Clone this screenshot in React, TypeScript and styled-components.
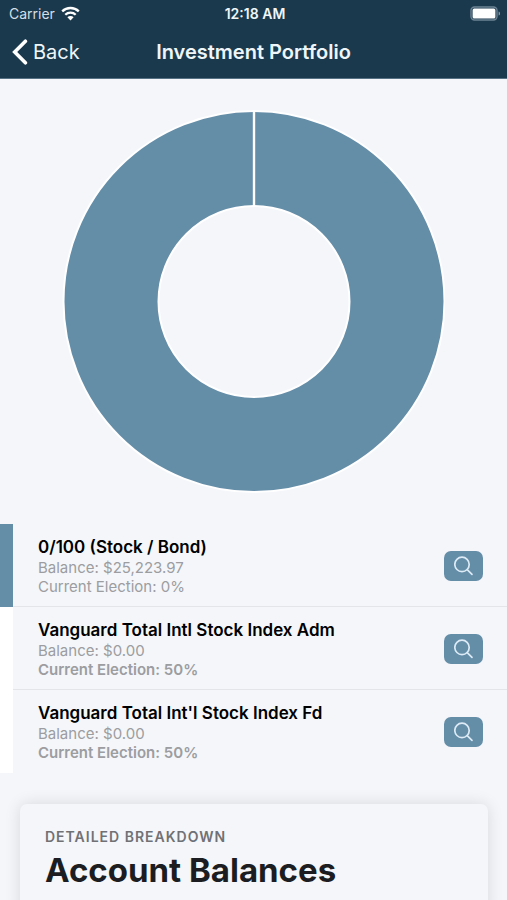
import React from "react";
import styled, { createGlobalStyle } from "styled-components";

const color = {
  navy: "#1b394d",
  steel: "#648da8",
  page: "#f4f6fa",
  line: "#e3e5e9",
  muted: "#9c9da0",
};

const GlobalStyle = createGlobalStyle`
  *, *::before, *::after { box-sizing: border-box; }
  body {
    margin: 0;
    background: ${color.page};
    color: #000;
    font-family: Inter, "Liberation Sans", sans-serif;
  }
  h1, h2, h3, p, ul { margin: 0; padding: 0; }
`;

const Screen = styled.div`
  display: flex;
  flex-direction: column;
  height: 100vh;
`;

const Header = styled.header`
  flex: none;
  background: ${color.navy};
  color: #eef6fa;
  border-bottom: 1px solid #567084;
`;

const StatusBar = styled.div`
  display: grid;
  grid-template-columns: 1fr auto 1fr;
  align-items: center;
  height: 27px;
  padding: 0 6px 0 9px;
  font-size: 14px;
  line-height: 20px;
`;

const Carrier = styled.span`
  display: flex;
  align-items: center;
  gap: 6px;
  color: #d3dfe6;
`;

const Clock = styled.time`
  font-size: 14px;
  font-weight: 600;
`;

const BatterySlot = styled.span`
  display: flex;
  justify-content: flex-end;
`;

const NavBar = styled.nav`
  display: grid;
  grid-template-columns: 1fr auto 1fr;
  align-items: center;
  height: 51px;
  padding: 0 12px 2px;
`;

const BackButton = styled.button`
  display: flex;
  align-items: center;
  justify-self: start;
  gap: 5px;
  padding: 0;
  border: 0;
  background: none;
  color: inherit;
  font: inherit;
  font-size: 20px;
  line-height: 28px;
  cursor: pointer;
`;

const NavTitle = styled.h1`
  font-size: 20px;
  font-weight: 600;
  line-height: 28px;
`;

const Content = styled.main`
  flex: 1;
  min-height: 0;
  overflow-y: auto;
  scrollbar-width: none;
`;

const ChartArea = styled.section`
  padding: 31px 62px;
`;

const Chart = styled.svg`
  display: block;
  width: 100%;
`;

const FundList = styled.ul`
  list-style: none;
`;

const FundItem = styled.li`
  display: flex;
`;

const Swatch = styled.span<{ $fill: string }>`
  flex: none;
  width: 13px;
  background: ${(p) => p.$fill};
`;

const FundBody = styled.div<{ $divided: boolean }>`
  flex: 1;
  display: flex;
  align-items: center;
  justify-content: space-between;
  padding: 12px 24px 10px 25px;
  border-bottom: 1px solid ${(p) => (p.$divided ? color.line : "transparent")};
`;

const FundName = styled.h3`
  font-size: 17px;
  font-weight: 600;
  line-height: 22px;
`;

const FundLine = styled.p<{ $strong?: boolean }>`
  color: ${color.muted};
  font-size: 15px;
  font-weight: ${(p) => (p.$strong ? 600 : 400)};
  line-height: 19px;
`;

const SearchButton = styled.button`
  flex: none;
  display: flex;
  align-items: center;
  justify-content: center;
  width: 39px;
  height: 30px;
  padding: 0;
  border: 0;
  border-radius: 7px;
  background: ${color.steel};
  color: #dcebf5;
  cursor: pointer;
`;

const Card = styled.section`
  min-height: 240px;
  margin: 31px 19px 32px 20px;
  padding: 24px 25px;
  border-radius: 7px;
  background: ${color.page};
  box-shadow: 0 0 16px rgba(0, 0, 0, 0.12);
`;

const Eyebrow = styled.p`
  color: #707174;
  font-size: 14px;
  font-weight: 600;
  letter-spacing: 1px;
  line-height: 18px;
  text-transform: uppercase;
`;

const CardTitle = styled.h2`
  color: #1c1d21;
  font-size: 33px;
  font-weight: 700;
  line-height: 48px;
`;

const funds = [
  { name: "0/100 (Stock / Bond)", balance: "$25,223.97", election: 0, fill: color.steel },
  { name: "Vanguard Total Intl Stock Index Adm", balance: "$0.00", election: 50, fill: "#fff" },
  { name: "Vanguard Total Int'l Stock Index Fd", balance: "$0.00", election: 50, fill: "#fff" },
];

function WifiIcon() {
  return (
    <svg width="19" height="15" viewBox="0 0 19 15" fill="none" stroke="#fff" strokeWidth="2.3" aria-hidden="true">
      <path d="M1.2 5.4a11.8 11.8 0 0 1 16.6 0" />
      <path d="M4.3 8.8a7.4 7.4 0 0 1 10.4 0" />
      <path d="M9.5 14.4 6.4 11.3a4.4 4.4 0 0 1 6.2 0z" fill="#fff" stroke="none" />
    </svg>
  );
}

function BatteryIcon() {
  return (
    <svg width="31" height="15" viewBox="0 0 31 15" aria-hidden="true">
      <rect x="1" y="1" width="26" height="13" rx="3.5" fill="none" stroke="#6d8494" strokeWidth="1.4" />
      <rect x="2.6" y="2.6" width="22.8" height="9.8" rx="1.5" fill="#fff" />
      <path d="M28.6 5.4c1.9.6 1.9 3.6 0 4.2z" fill="#8b9eab" />
    </svg>
  );
}

function ChevronIcon() {
  return (
    <svg width="16" height="26" viewBox="0 0 16 26" fill="none" stroke="#fff" strokeWidth="3.6" strokeLinecap="round" aria-hidden="true">
      <path d="M13.4 2.2 2.7 13l10.7 10.8" />
    </svg>
  );
}

function SearchIcon() {
  return (
    <svg width="20" height="20" viewBox="0 0 20 20" fill="none" stroke="currentColor" strokeWidth="1.7" strokeLinecap="round" aria-hidden="true">
      <circle cx="8" cy="8.4" r="7.2" />
      <path d="m13.2 13.6 4.8 4.7" />
    </svg>
  );
}

export default function App() {
  return (
    <>
      <GlobalStyle />
      <Screen>
        <Header>
          <StatusBar>
            <Carrier>
              Carrier
              <WifiIcon />
            </Carrier>
            <Clock>12:18 AM</Clock>
            <BatterySlot>
              <BatteryIcon />
            </BatterySlot>
          </StatusBar>
          <NavBar>
            <BackButton type="button">
              <ChevronIcon />
              Back
            </BackButton>
            <NavTitle>Investment Portfolio</NavTitle>
          </NavBar>
        </Header>
        <Content>
          <ChartArea>
            <Chart viewBox="0 0 383 383" role="img" aria-label="Portfolio allocation">
              <circle cx="192" cy="191.5" r="143" fill="none" stroke="#fff" strokeWidth="97" />
              <circle cx="192" cy="191.5" r="143" fill="none" stroke={color.steel} strokeWidth="93" />
              <path d="M192 1v95" stroke="#fff" strokeWidth="2.4" />
            </Chart>
          </ChartArea>
          <FundList>
            {funds.map((fund, i) => (
              <FundItem key={fund.name}>
                <Swatch $fill={fund.fill} />
                <FundBody $divided={i < funds.length - 1}>
                  <div>
                    <FundName>{fund.name}</FundName>
                    <FundLine>Balance: {fund.balance}</FundLine>
                    <FundLine $strong={fund.election > 0}>Current Election: {fund.election}%</FundLine>
                  </div>
                  <SearchButton type="button" aria-label={`View ${fund.name}`}>
                    <SearchIcon />
                  </SearchButton>
                </FundBody>
              </FundItem>
            ))}
          </FundList>
          <Card>
            <Eyebrow>Detailed Breakdown</Eyebrow>
            <CardTitle>Account Balances</CardTitle>
          </Card>
        </Content>
      </Screen>
    </>
  );
}
